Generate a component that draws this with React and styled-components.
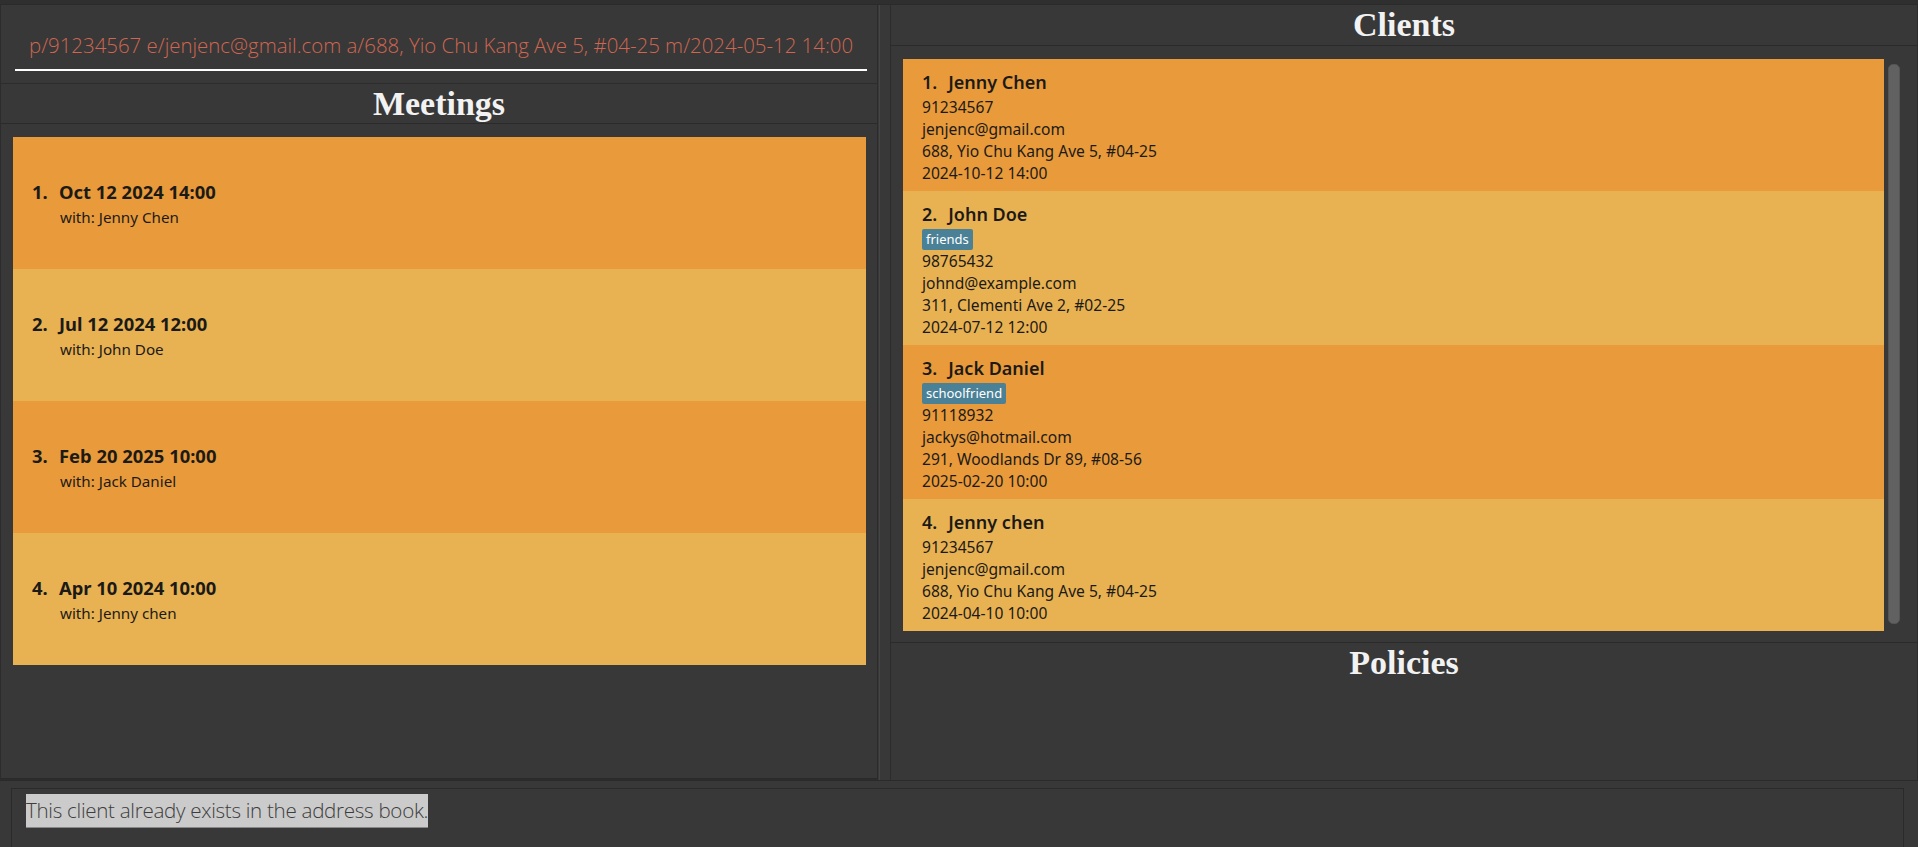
import React from "react";
import styled, { createGlobalStyle } from "styled-components";

const GlobalStyle = createGlobalStyle`
  html, body {
    margin: 0;
    padding: 0;
    background: #383838;
    overflow: hidden;
  }
  * {
    box-sizing: border-box;
  }
`;

const meetings = [
  { date: "Oct 12 2024 14:00", with: "Jenny Chen" },
  { date: "Jul 12 2024 12:00", with: "John Doe" },
  { date: "Feb 20 2025 10:00", with: "Jack Daniel" },
  { date: "Apr 10 2024 10:00", with: "Jenny chen" },
];

const clients = [
  {
    name: "Jenny Chen",
    tags: [],
    phone: "91234567",
    email: "jenjenc@gmail.com",
    address: "688, Yio Chu Kang Ave 5, #04-25",
    meeting: "2024-10-12 14:00",
  },
  {
    name: "John Doe",
    tags: ["friends"],
    phone: "98765432",
    email: "johnd@example.com",
    address: "311, Clementi Ave 2, #02-25",
    meeting: "2024-07-12 12:00",
  },
  {
    name: "Jack Daniel",
    tags: ["schoolfriend"],
    phone: "91118932",
    email: "jackys@hotmail.com",
    address: "291, Woodlands Dr 89, #08-56",
    meeting: "2025-02-20 10:00",
  },
  {
    name: "Jenny chen",
    tags: [],
    phone: "91234567",
    email: "jenjenc@gmail.com",
    address: "688, Yio Chu Kang Ave 5, #04-25",
    meeting: "2024-04-10 10:00",
  },
];

const Window = styled.div`
  height: 847px;
  display: flex;
  flex-direction: column;
  background: #383838;
  font-family: "Noto Sans", "Open Sans", sans-serif;
`;

const TopStrip = styled.div`
  height: 5px;
  background: #2f2f2f;
  border-bottom: 1px solid #2a2a2a;
`;

const Main = styled.div`
  height: 775px;
  display: flex;
`;

const LeftPane = styled.div`
  width: 878px;
  display: flex;
  flex-direction: column;
  border: 1px solid #2c2c2c;
  border-top: none;
`;

const Divider = styled.div`
  width: 11px;
  border-left: 1px solid #454545;
  margin-left: 1px;
`;

const RightPane = styled.div`
  flex: 1;
  display: flex;
  flex-direction: column;
  border-left: 1px solid #2c2c2c;
  border-right: 1px solid #2c2c2c;
`;

const CommandBox = styled.div`
  height: 79px;
  padding: 0 10px 12px 14px;
  display: flex;
  align-items: flex-end;
  border-bottom: 1px solid #2c2c2c;
`;

const CommandField = styled.div`
  width: 100%;
  height: 50px;
  padding: 0 14px;
  display: flex;
  align-items: center;
  border-bottom: 2px solid #ffffff;
  color: #d06651;
  font-family: "Open Sans", "Noto Sans", sans-serif;
  font-weight: 300;
  font-size: 20.4px;
  white-space: nowrap;
`;

const SectionHeader = styled.div`
  height: ${({ $h }) => $h}px;
  display: flex;
  align-items: center;
  justify-content: center;
  color: #f2f2f2;
  font-family: "Liberation Serif", "Times New Roman", serif;
  font-weight: bold;
  font-size: 34px;
  border-bottom: ${({ $open }) => ($open ? "none" : "1px solid #2a2a2a")};
`;

const ListBox = styled.div`
  flex: ${({ $grow }) => ($grow ? 1 : "none")};
  height: ${({ $h }) => ($h ? `${$h}px` : "auto")};
  padding: 13px 11px 12px ${({ $pl }) => $pl}px;
  border-bottom: 1px solid #2a2a2a;
  display: flex;
  gap: 4px;
`;

const Cards = styled.div`
  flex: 1;
  display: flex;
  flex-direction: column;
  align-self: flex-start;
`;

const MeetingCard = styled.div`
  height: 132px;
  padding-left: 19px;
  display: grid;
  grid-template-columns: 27px 1fr;
  align-content: center;
  background: ${({ $odd }) => ($odd ? "#e99a3b" : "#e8b253")};
  color: #1c1a17;
`;

const Index = styled.span`
  font-weight: 700;
  font-size: 18.4px;
  line-height: 27px;
`;

const MeetingDate = styled.div`
  font-weight: 700;
  font-size: 18.4px;
  line-height: 27px;
`;

const MeetingWith = styled.div`
  grid-column: 2;
  font-size: 15.2px;
  line-height: 24px;
  padding-left: 1px;
`;

const ClientCard = styled.div`
  padding: 9px 19px 7px;
  background: ${({ $odd }) => ($odd ? "#e99a3b" : "#e8b253")};
  color: #1c1a17;
`;

const ClientName = styled.div`
  font-weight: 600;
  font-size: 18px;
  line-height: 28px;
  display: flex;
  gap: 11px;
`;

const TagRow = styled.div`
  height: 22px;
  display: flex;
  align-items: center;
  gap: 4px;
`;

const Tag = styled.span`
  background: #4b8196;
  color: #ffffff;
  font-size: 13px;
  line-height: 21px;
  padding: 0 4px;
  border-radius: 2px;
`;

const Detail = styled.div`
  font-size: 15.6px;
  line-height: 22px;
`;

const ScrollTrack = styled.div`
  width: 12px;
  margin-right: 6px;
  padding-top: 5px;
  display: flex;
`;

const ScrollThumb = styled.div`
  width: 12px;
  height: 560px;
  background: #616161;
  border: 1px solid #555555;
  border-radius: 5px;
`;

const BottomArea = styled.div`
  flex: 1;
  border-top: 1px solid #2a2a2a;
  padding: 7px 14px 0 11px;
`;

const ResultBox = styled.div`
  height: 100%;
  border: 1px solid #2a2a2a;
  border-bottom: none;
  padding: 5px 14px;
`;

const ResultText = styled.span`
  display: inline-block;
  background: #cbcbcb;
  color: #3d3d3d;
  font-family: "Open Sans", "Noto Sans", sans-serif;
  font-weight: 300;
  font-size: 20.6px;
  line-height: 33px;
  border-bottom: 1px solid #888888;
  letter-spacing: -0.3px;
`;

export default function App() {
  return (
    <Window>
      <GlobalStyle />
      <TopStrip />
      <Main>
        <LeftPane>
          <CommandBox>
            <CommandField>
              p/91234567 e/jenjenc@gmail.com a/688, Yio Chu Kang Ave 5, #04-25
              m/2024-05-12 14:00
            </CommandField>
          </CommandBox>
          <SectionHeader $h={40}>Meetings</SectionHeader>
          <ListBox $grow $pl={12}>
            <Cards>
              {meetings.map((m, i) => (
                <MeetingCard key={i} $odd={i % 2 === 0}>
                  <Index>{i + 1}.</Index>
                  <MeetingDate>{m.date}</MeetingDate>
                  <MeetingWith>with: {m.with}</MeetingWith>
                </MeetingCard>
              ))}
            </Cards>
          </ListBox>
        </LeftPane>
        <Divider />
        <RightPane>
          <SectionHeader $h={41}>Clients</SectionHeader>
          <ListBox $h={597} $pl={12}>
            <Cards>
              {clients.map((c, i) => (
                <ClientCard key={i} $odd={i % 2 === 0}>
                  <ClientName>
                    <span>{i + 1}.</span>
                    <span>{c.name}</span>
                  </ClientName>
                  {c.tags.length > 0 && (
                    <TagRow>
                      {c.tags.map((t) => (
                        <Tag key={t}>{t}</Tag>
                      ))}
                    </TagRow>
                  )}
                  <Detail>{c.phone}</Detail>
                  <Detail>{c.email}</Detail>
                  <Detail>{c.address}</Detail>
                  <Detail>{c.meeting}</Detail>
                </ClientCard>
              ))}
            </Cards>
            <ScrollTrack>
              <ScrollThumb />
            </ScrollTrack>
          </ListBox>
          <SectionHeader $h={40} $open>
            Policies
          </SectionHeader>
        </RightPane>
      </Main>
      <BottomArea>
        <ResultBox>
          <ResultText>This client already exists in the address book.</ResultText>
        </ResultBox>
      </BottomArea>
    </Window>
  );
}
